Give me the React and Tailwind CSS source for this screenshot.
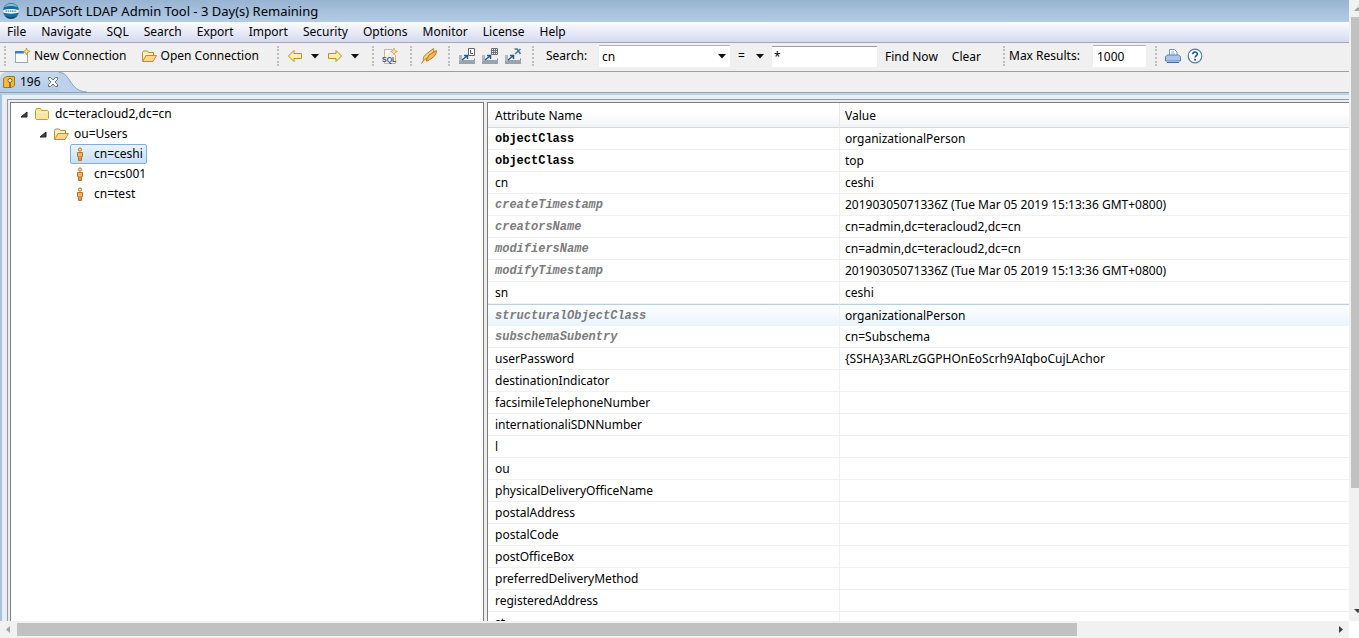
import { useState } from 'react';

const menus = ['File', 'Navigate', 'SQL', 'Search', 'Export', 'Import', 'Security', 'Options', 'Monitor', 'License', 'Help'];

// kind: 'must' = required attribute, 'op' = operational attribute
const attributes = [
  { name: 'objectClass', value: 'organizationalPerson', kind: 'must' },
  { name: 'objectClass', value: 'top', kind: 'must' },
  { name: 'cn', value: 'ceshi' },
  { name: 'createTimestamp', value: '20190305071336Z (Tue Mar 05 2019 15:13:36 GMT+0800)', kind: 'op' },
  { name: 'creatorsName', value: 'cn=admin,dc=teracloud2,dc=cn', kind: 'op' },
  { name: 'modifiersName', value: 'cn=admin,dc=teracloud2,dc=cn', kind: 'op' },
  { name: 'modifyTimestamp', value: '20190305071336Z (Tue Mar 05 2019 15:13:36 GMT+0800)', kind: 'op' },
  { name: 'sn', value: 'ceshi' },
  { name: 'structuralObjectClass', value: 'organizationalPerson', kind: 'op' },
  { name: 'subschemaSubentry', value: 'cn=Subschema', kind: 'op' },
  { name: 'userPassword', value: '{SSHA}3ARLzGGPHOnEoScrh9AIqboCujLAchor' },
  { name: 'destinationIndicator', value: '' },
  { name: 'facsimileTelephoneNumber', value: '' },
  { name: 'internationaliSDNNumber', value: '' },
  { name: 'l', value: '' },
  { name: 'ou', value: '' },
  { name: 'physicalDeliveryOfficeName', value: '' },
  { name: 'postalAddress', value: '' },
  { name: 'postalCode', value: '' },
  { name: 'postOfficeBox', value: '' },
  { name: 'preferredDeliveryMethod', value: '' },
  { name: 'registeredAddress', value: '' },
  { name: 'st', value: '' },
];

const nameStyles = {
  must: 'font-["Liberation_Mono",monospace] font-bold text-[12px]',
  op: 'font-["Liberation_Mono",monospace] font-bold italic text-[12px] text-[#7c7c7c]',
};

function AppLogo() {
  return (
    <svg width="18" height="18" viewBox="0 0 18 18">
      <circle cx="9" cy="9" r="8" fill="#1d6d9c" />
      <path d="M2.500 5a8 8 0 0 1 13 0c-3-1.500-10-1.500-13 0z" fill="#7cc4de" />
      <path d="M1.200 8c4-1.500 11.600-1.500 15.600 0v2.500c-4 1.500-11.600 1.500-15.600 0z" fill="#eaf6fc" />
      <path d="M3.500 9.200h11" stroke="#2b83b4" strokeWidth="1.200" strokeDasharray="1.500 0.700" />
      <path d="M3 14c4 1.500 8 1.500 12 0a8 8 0 0 1-12 0z" fill="#123f66" />
    </svg>
  );
}

function NewWindowIcon() {
  return (
    <svg width="16" height="16" viewBox="0 0 16 16">
      <rect x="1.500" y="3.500" width="12" height="11" fill="#f6fafd" stroke="#9aa7b4" />
      <path d="M1 3h9v2.500H1z" fill="#3f7fc0" />
      <path d="M12.500 0l1 2.500 2.500 1-2.500 1-1 2.500-1-2.500-2.500-1 2.500-1z" fill="#f8e27a" stroke="#b8912c" strokeWidth="0.800" />
    </svg>
  );
}

function OpenFolderIcon() {
  return (
    <svg width="16" height="16" viewBox="0 0 16 16">
      <path d="M1.500 13V4.500l1-1.500h4l1 1.500h5V7" fill="#fdf0c4" stroke="#c48a2c" />
      <path d="M1.500 13.500L5 7.500h10.500L12 13.500z" fill="#fbd98a" stroke="#c48a2c" strokeLinejoin="round" />
    </svg>
  );
}

function FolderIcon() {
  return (
    <svg width="16" height="16" viewBox="0 0 16 16">
      <path d="M1.500 12.500v-8l1-2h4l1 2h6l1 1v7l-1 1h-11z" fill="#fbe3a0" stroke="#c99a3f" />
      <path d="M2.500 6h11" stroke="#fff6d8" />
    </svg>
  );
}

function ArrowIcon({ right }) {
  return (
    <svg width="16" height="16" viewBox="0 0 16 16">
      <path
        d={right ? 'M14.500 8L9 2.500v3H1.500v5H9v3z' : 'M1.500 8L7 2.500v3h7.500v5H7v3z'}
        fill="#fdf0a8"
        stroke="#c08a25"
        strokeLinejoin="round"
      />
    </svg>
  );
}

function Caret() {
  return (
    <svg width="8" height="5" viewBox="0 0 8 5">
      <path d="M0 0h8L4 4.500z" fill="#111" />
    </svg>
  );
}

function SqlIcon() {
  return (
    <svg width="16" height="16" viewBox="0 0 16 16">
      <path d="M2.500 9V1.500h8M13.500 7v8.500h-11V14" fill="#fff" stroke="#d9b56b" />
      <path d="M12 0l1 2.500 2.500 1-2.500 1-1 2.500-1-2.500-2.500-1 2.500-1z" fill="#fbe68b" stroke="#c7a03a" strokeWidth="0.700" />
      <text x="0" y="14" fontSize="7" fontWeight="bold" fontFamily="Liberation Sans" fill="#20508f">SQL</text>
    </svg>
  );
}

function PlugIcon() {
  return (
    <svg width="18" height="18" viewBox="0 0 18 18">
      <path d="M1.500 16.500l2.500-4" stroke="#b97a1c" />
      <path d="M3.500 13.500c-1-3 1-5 3.500-7l6.500-5c1 3-1 5.500-3.500 7.500z" fill="#f9cf7c" stroke="#b97a1c" strokeLinejoin="round" />
      <path d="M6 14l3-6 7.500-4.500c0 3.500-2 6-4.500 7.500-2 1.500-4 3-6 3z" fill="#f3b95a" stroke="#b97a1c" strokeLinejoin="round" />
    </svg>
  );
}

function ExportIcon({ type }) {
  return (
    <svg width="18" height="18" viewBox="0 0 18 18">
      <path d="M1.500 8.500v8h15v-5" fill="none" stroke="#7e8790" />
      <path d="M1 13h16v4H1z" fill="#98a3ad" />
      <path d="M1 8h3v6H1z" fill="#aeb7bf" />
      <path d="M4 13l5-4M6 8.500h3.500V12" fill="none" stroke="#24598f" strokeWidth="1.500" />
      {type === 'ldif' && <path d="M10.500 1.500h6v7h-6zM12.500 3v3.500H15" fill="#fff" stroke="#5b6670" />}
      {type === 'grid' && <path d="M10.500 1.500h6v6h-6zM12.500 1.500v6M14.500 1.500v6M10.500 3.500h6M10.500 5.500h6" fill="#fff" stroke="#69737c" />}
      {type === 'excel' && <path d="M10.500 2H13l3.500 5M16.500 2L11 7" fill="none" stroke="#3c76a8" strokeWidth="1.500" />}
    </svg>
  );
}

function PrintIcon() {
  return (
    <svg width="16" height="16" viewBox="0 0 16 16">
      <path d="M4.500 8V1.500h5l2.500 2.500v4" fill="#fff" stroke="#6d93c4" />
      <path d="M6 4h3M6 6h4" stroke="#8fb0d8" />
      <path d="M.500 8.500l2-1.500h11l2 1.500v4.500h-15z" fill="#a9c6ea" stroke="#5a83ba" strokeLinejoin="round" />
      <path d="M2 14.500h12" stroke="#3f6aa5" />
    </svg>
  );
}

function HelpIcon() {
  return (
    <svg width="16" height="16" viewBox="0 0 16 16">
      <circle cx="8" cy="8" r="6.800" fill="#fff" stroke="#4a7fae" strokeWidth="1.200" />
      <path d="M5.800 6.300c0-3 4.600-2.900 4.600-.3 0 1.500-2.300 1.700-2.300 3.500" fill="none" stroke="#1e5a92" strokeWidth="1.600" />
      <path d="M7.200 10.800h1.800v1.700H7.200z" fill="#1e5a92" />
    </svg>
  );
}

function PersonIcon() {
  return (
    <svg width="8" height="14" viewBox="0 0 8 14">
      <circle cx="4" cy="2.500" r="1.600" fill="#fbd9a0" stroke="#b5702a" />
      <path d="M1.500 5.500h5v4h-1v4h-3v-4h-1z" fill="#f3b564" stroke="#b5702a" strokeLinejoin="round" />
      <path d="M4 9v4" stroke="#b5702a" strokeWidth="0.800" />
    </svg>
  );
}

function ServerIcon() {
  return (
    <svg width="14" height="14" viewBox="0 0 14 14">
      <path d="M1.500 3.500l3-2h8v9l-3 2h-8z" fill="#f2bb3f" stroke="#a8741a" strokeLinejoin="round" />
      <circle cx="8" cy="5.500" r="2" fill="#fff3c0" stroke="#8a5d14" />
      <path d="M8 7.500V13" stroke="#8a5d14" strokeWidth="1.500" />
    </svg>
  );
}

function CloseIcon() {
  return (
    <svg width="12" height="12" viewBox="0 0 12 12">
      <path
        d="M1.500 1.500h2L6 4l2.500-2.500h2v2L8 6l2.500 2.500v2h-2L6 8l-2.500 2.500h-2v-2L4 6 1.500 3.500z"
        fill="#fff"
        stroke="#6b7580"
      />
    </svg>
  );
}

function Expander() {
  return (
    <svg width="8" height="8" viewBox="0 0 8 8">
      <path d="M7 2v5H1z" fill="#404040" stroke="#222" strokeLinejoin="round" />
    </svg>
  );
}

// A toolbar section with the dotted grip on its left edge
function ToolGroup({ className, children }) {
  return (
    <div className={`flex shrink-0 items-center ${className}`}>
      <span className="mr-2 h-5 border-l-2 border-dotted border-[#bdbdbd]" />
      {children}
    </div>
  );
}

function TreeRow({ indent, icon, label, expandable, selected, onSelect }) {
  return (
    <li className={`flex h-5 items-center ${indent}`}>
      {expandable && <span className="mr-0.5 w-2"><Expander /></span>}
      <button
        onClick={onSelect}
        className={`flex h-5 items-center rounded-xs border px-[3px] ${
          selected ? 'border-[#84acdd] bg-linear-to-b from-[#eaf4fd] to-[#c5dffb]' : 'border-transparent'
        }`}
      >
        {icon}
        <span>{label}</span>
      </button>
    </li>
  );
}

export default function App() {
  const [entry, setEntry] = useState('cn=ceshi');
  const [filter, setFilter] = useState('*');
  const [maxResults, setMaxResults] = useState('1000');

  return (
    <div className='flex h-screen flex-col overflow-hidden bg-[#f0f0f0] font-["Noto_Sans","Noto_Sans_CJK_SC",sans-serif] text-[12px] leading-4 text-black'>
      <div className="flex min-h-0 flex-1">
        <div className="flex min-w-0 flex-1 flex-col">
          <header className="flex h-[22px] shrink-0 items-center gap-1.5 bg-linear-to-b from-[#98b4d2] to-[#b4cce6] px-0.5">
            <AppLogo />
            <h1 className="text-[13px]">LDAPSoft LDAP Admin Tool - 3 Day(s) Remaining</h1>
          </header>

          <nav className="flex h-[21px] shrink-0 items-center gap-[15px] border-b border-[#a9a4b4] bg-linear-to-b from-[#fbfcfe] to-[#d5daf0] px-[7px]">
            {menus.map((menu) => (
              <button key={menu}>{menu}</button>
            ))}
          </nav>

          {/* Toolbar */}
          <div className="flex h-[29px] shrink-0 items-center border-b border-[#a0a0a0] pb-0.5 pl-1">
            <ToolGroup className="w-[273px]">
              <button className="flex items-center gap-1"><NewWindowIcon />New Connection</button>
              <button className="ml-3.5 flex items-center gap-1"><OpenFolderIcon />Open Connection</button>
            </ToolGroup>
            <ToolGroup className="w-[95px]">
              <button aria-label="Back"><ArrowIcon /></button>
              <button aria-label="Back history" className="ml-2"><Caret /></button>
              <button aria-label="Forward" className="ml-2"><ArrowIcon right /></button>
              <button aria-label="Forward history" className="ml-2"><Caret /></button>
            </ToolGroup>
            <ToolGroup className="w-[38px]">
              <button aria-label="New SQL"><SqlIcon /></button>
            </ToolGroup>
            <ToolGroup className="w-[38px]">
              <button aria-label="Connect"><PlugIcon /></button>
            </ToolGroup>
            <ToolGroup className="w-[84px]">
              <div className="flex gap-[5px]">
                <button aria-label="Export LDIF"><ExportIcon type="ldif" /></button>
                <button aria-label="Export CSV"><ExportIcon type="grid" /></button>
                <button aria-label="Export Excel"><ExportIcon type="excel" /></button>
              </div>
            </ToolGroup>
            <ToolGroup className="w-[471px]">
              <label htmlFor="attr" className="w-[57px] pl-1">Search:</label>
              <div className="relative flex items-center">
                <select id="attr" className="h-[22px] w-[131px] appearance-none border-t border-[#b4b0b8] bg-white px-[3px]">
                  <option>cn</option>
                  <option>sn</option>
                </select>
                <span className="pointer-events-none absolute right-1"><Caret /></span>
              </div>
              <div className="relative ml-2 flex items-center">
                <select aria-label="Operator" className="h-5 w-[34px] appearance-none bg-transparent">
                  <option>=</option>
                  <option>!=</option>
                </select>
                <span className="pointer-events-none absolute right-2"><Caret /></span>
              </div>
              <input
                aria-label="Filter value"
                value={filter}
                onChange={(e) => setFilter(e.target.value)}
                className="h-[21px] w-[105px] border-t border-[#9a9a9a] bg-white px-0.5"
              />
              <button className="ml-2 pt-0.5">Find Now</button>
              <button className="ml-3.5 pt-0.5">Clear</button>
            </ToolGroup>
            <ToolGroup className="w-[152px]">
              <label htmlFor="max" className="-ml-1 w-20">Max Results:</label>
              <input
                id="max"
                value={maxResults}
                onChange={(e) => setMaxResults(e.target.value)}
                className="ml-1 h-[22px] w-[53px] border-t border-[#b4b0b8] bg-white px-1"
              />
            </ToolGroup>
            <ToolGroup>
              <div className="flex gap-[6px]">
                <button aria-label="Print"><PrintIcon /></button>
                <button aria-label="Help"><HelpIcon /></button>
              </div>
            </ToolGroup>
          </div>

          {/* Connection tabs */}
          <div className="flex h-[21px] shrink-0 items-stretch border-b border-[#8fa3b5]">
            <div className="flex items-center gap-1 rounded-tl-md bg-linear-to-b from-[#c6d9ee] to-[#b3cce6] pl-0.5">
              <ServerIcon />
              <span>196</span>
              <button aria-label="Close tab" className="ml-0.5"><CloseIcon /></button>
            </div>
            <svg width="28" height="20" viewBox="0 0 28 20">
              <path d="M0 0c12 0 10 19 28 20H0z" fill="#bdd2ea" />
              <path d="M0 .500c12 0 10 19 28 19.500" fill="none" stroke="#8fa3b5" />
            </svg>
          </div>

          <div className="flex min-h-0 flex-1 border-t-2 border-l-2 border-[#a9c3de] border-t-[#bed3e2] bg-[#e6eff7] pt-1 pl-[5px]">
            <div className="flex min-w-0 flex-1 gap-[3px] border-t border-l border-[#9a9a9a] bg-[#ececec] pt-0.5 pl-0.5">
              <ul className="w-[474px] shrink-0 border border-b-0 border-[#7d7d7d] bg-white pt-px">
                <TreeRow
                  indent="pl-[9px]"
                  expandable
                  icon={<span className="mr-[5px]"><FolderIcon /></span>}
                  label="dc=teracloud2,dc=cn"
                  selected={entry === 'dc=teracloud2,dc=cn'}
                  onSelect={() => setEntry('dc=teracloud2,dc=cn')}
                />
                <TreeRow
                  indent="pl-[28px]"
                  expandable
                  icon={<span className="mr-[5px]"><OpenFolderIcon /></span>}
                  label="ou=Users"
                  selected={entry === 'ou=Users'}
                  onSelect={() => setEntry('ou=Users')}
                />
                {['cn=ceshi', 'cn=cs001', 'cn=test'].map((dn) => (
                  <TreeRow
                    key={dn}
                    indent="pl-[59px]"
                    icon={<span className="mr-2.5 ml-0.5"><PersonIcon /></span>}
                    label={dn}
                    selected={entry === dn}
                    onSelect={() => setEntry(dn)}
                  />
                ))}
              </ul>

              <div className="min-w-0 flex-1 overflow-hidden border-t border-l border-[#7d7d7d] bg-white">
                <table className="w-full table-fixed border-separate border-spacing-0">
                  <colgroup>
                    <col className="w-[352px]" />
                    <col />
                  </colgroup>
                  <thead>
                    <tr className="h-[25px] bg-linear-to-b from-white from-40% to-[#f1f2f4] text-left">
                      <th className="border-r border-b border-[#d8d8d8] border-r-[#e8e8e8] px-[7px] pt-0.5 font-normal">Attribute Name</th>
                      <th className="border-b border-[#d8d8d8] px-[5px] pt-0.5 font-normal">Value</th>
                    </tr>
                  </thead>
                  <tbody>
                    {attributes.map((attr, idx) => {
                      const hot = attr.name === 'structuralObjectClass';
                      const cell = hot
                        ? 'border-t border-t-[#b8d0e4] bg-linear-to-b from-white to-[#e8f4fc]'
                        : 'border-b border-b-[#f0f0f0]';
                      return (
                        <tr key={idx} className="h-[22px]">
                          <td className={`border-r border-r-[#f0f0f0] px-[7px] ${cell}`}>
                            <span className={nameStyles[attr.kind] || ''}>{attr.name}</span>
                          </td>
                          <td className={`px-[5px] ${cell}`}>{attr.value}</td>
                        </tr>
                      );
                    })}
                  </tbody>
                </table>
              </div>
            </div>
          </div>
        </div>

        {/* Vertical scrollbar */}
        <div className="flex w-[10px] shrink-0 flex-col bg-[#f1f1f1] pl-0.5">
          <div className="flex h-[17px] items-center justify-end">
            <svg width="5" height="4" viewBox="0 0 5 4">
              <path d="M0 4h8L4 0z" fill="#a3a3a3" />
            </svg>
          </div>
          <div className="h-[471px] bg-[#c1c1c1]" />
          <div className="flex flex-1 items-end justify-end overflow-hidden pb-2">
            <svg width="5" height="4" viewBox="0 0 5 4">
              <path d="M0 0h8L4 4z" fill="#404040" />
            </svg>
          </div>
        </div>
      </div>

      {/* Horizontal scrollbar */}
      <div className="flex h-[17px] shrink-0">
        <div className="flex flex-1 items-center bg-[#f1f1f1]">
          <svg width="17" height="17" viewBox="0 0 17 17">
            <path d="M10 5v7L6 8.500z" fill="#a3a3a3" />
          </svg>
          <div className="h-[13px] w-[78.6%] bg-[#c1c1c1]" />
          <svg width="17" height="17" viewBox="0 0 17 17" className="ml-auto">
            <path d="M7 5v7l4-3.500z" fill="#404040" />
          </svg>
        </div>
        <div className="w-[10px] bg-white" />
      </div>
    </div>
  );
}
